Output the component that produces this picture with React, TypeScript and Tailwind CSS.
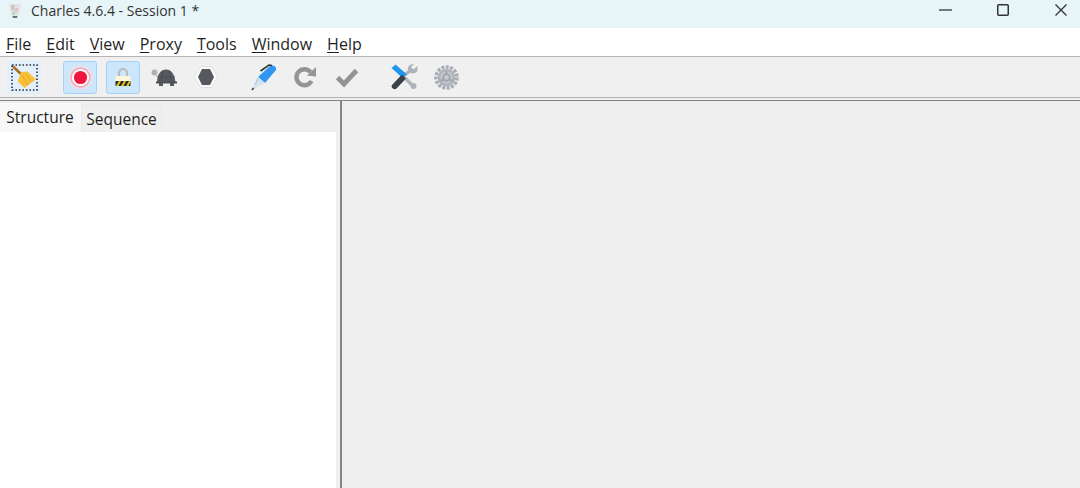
const menus = ["File", "Edit", "View", "Proxy", "Tools", "Window", "Help"];

const Broom = () => (
  <svg width="27" height="27" viewBox="0 0 27 27">
    <rect x="1" y="1" width="25" height="25" fill="none" stroke="#2b3340" strokeWidth="1.6" strokeDasharray="1.6 1.9" />
    <path d="M2 2.5 L10 10" stroke="#a8742c" strokeWidth="2.8" />
    <path d="M10 8 L16.5 7.5 L25 15.5 L20 19 L13.5 24 L6.7 17.5 Z" fill="#f8c139" />
    <path d="M11 11 L17 21 M15 10 L20 17" stroke="#e6a51f" strokeWidth="1" />
  </svg>
);

const Record = () => (
  <svg width="25" height="25" viewBox="0 0 25 25">
    <circle cx="12.5" cy="12.5" r="12" fill="#efdfe6" />
    <circle cx="12.5" cy="12.5" r="9.4" fill="#fff" stroke="#f3aabb" strokeWidth="1.6" />
    <circle cx="12.5" cy="12.5" r="6.6" fill="#f0173f" />
  </svg>
);

const Lock = () => (
  <svg width="16" height="19" viewBox="0 0 16 19">
    <path d="M4 9 V5 a4 4 0 0 1 8 0 V9" fill="none" stroke="#b9bcc1" strokeWidth="2.2" />
    <rect x="0.5" y="8" width="15" height="10" rx="1" fill="#fbf6dc" />
    <rect x="0.5" y="13" width="15" height="5" fill="#2d2c22" />
    <path d="M1 18 L4 13 H6 L3.5 18 Z M6 18 L9 13 H11 L8.5 18 Z M11 18 L14 13 H15.5 L13.5 18 Z" fill="#e7c52c" />
  </svg>
);

const Turtle = () => (
  <svg width="26" height="19" viewBox="0 0 26 19">
    <circle cx="3.5" cy="4.5" r="3" fill="#aeb1b5" />
    <path d="M4 6 L10 10 L8 12 Z" fill="#aeb1b5" />
    <path d="M6 14 C6.5 5 10.5 1.5 15 1.5 C20 1.5 23.5 6 24.5 14 Z" fill="#55585e" />
    <path d="M12 2.5 L10 14 M18 2.5 L20 14 M7 9 H24" stroke="#494c52" strokeWidth="0.8" />
    <path d="M5 13.5 H26 V15.5 H5 Z" fill="#4c4f55" />
    <path d="M8 15 H12 V18 H8 Z M19 15 H23 V18 H19 Z" fill="#55585e" />
  </svg>
);

const Stop = () => (
  <svg width="24" height="24" viewBox="0 0 24 24">
    <path d="M6.5 1.5 H17.5 L23.5 12 L17.5 22.5 H6.5 L0.5 12 Z" fill="#fafafb" stroke="#e0e2e5" strokeWidth="1" />
    <path d="M8 4 H16 L20 12 L16 20 H8 L4 12 Z" fill="#55585e" />
  </svg>
);

const Pen = () => (
  <svg width="26" height="27" viewBox="0 0 26 27">
    <path d="M7 13 L19 2 C22 0.5 26 2.5 25 6 L14 19 Z" fill="#2f96f3" />
    <path d="M9.5 7 L18 1 L21 1.5" fill="none" stroke="#30343a" strokeWidth="1.6" />
    <path d="M7 13 L14 19 L3 25 L1.5 24 Z" fill="#d5e3f1" />
    <path d="M7 14 L4 21" stroke="#a9c3dc" strokeWidth="1" />
    <path d="M2.5 24 L1 26" stroke="#3a3d42" strokeWidth="1.6" />
  </svg>
);

const Redo = () => (
  <svg width="24" height="24" viewBox="0 0 24 24">
    <path d="M18.5 16 A8 8 0 1 1 17.5 7" fill="none" stroke="#949494" strokeWidth="4.4" />
    <path d="M14 10.5 L23 11.5 L23 2 Z" fill="#949494" />
  </svg>
);

const Check = () => (
  <svg width="24" height="22" viewBox="0 0 24 22">
    <path d="M2.5 11.5 L9 18 L21.5 4.5" fill="none" stroke="#949494" strokeWidth="4.8" />
  </svg>
);

const Tools = () => (
  <svg width="27" height="26" viewBox="0 0 27 26">
    <path d="M14 14 L22 22" stroke="#aeb4bb" strokeWidth="3.4" />
    <circle cx="22.5" cy="22" r="3" fill="#aeb4bb" />
    <path d="M9 15 L21 5" stroke="#aeb4bb" strokeWidth="3.4" />
    <path d="M26.5 2 L22.5 5.5 L20 3 L23 0.5 C19 -0.5 16 3 17 6.5 C18.5 10 24 10.5 26.5 7 Z" fill="#aeb4bb" />
    <path d="M0.5 4 L4.5 0.5 L15.5 10 L12 14.5 Z" fill="#2196f0" />
    <path d="M11 10.5 L15 14.5 L5.5 24.5 C3 26.5 -0.5 23.5 1 21 Z" fill="#3c4048" />
  </svg>
);

const Gear = () => (
  <svg width="25" height="25" viewBox="0 0 25 25">
    <circle cx="12.5" cy="12.5" r="10.5" fill="none" stroke="#a9adb5" strokeWidth="3.6" strokeDasharray="3 1.4" />
    <circle cx="12.5" cy="12.5" r="7.5" fill="#c6c9ce" stroke="#aeb2b9" strokeWidth="2.6" />
    <circle cx="12.5" cy="12.5" r="3.4" fill="none" stroke="#a2a6ae" strokeWidth="2" />
    <path d="M12.5 6 V9 M6.5 16 L9.5 14.5 M18.5 16 L15.5 14.5" stroke="#a2a6ae" strokeWidth="2" />
  </svg>
);

const AppIcon = () => (
  <svg width="14" height="16" viewBox="0 0 14 16">
    <path d="M1 1 H13 L10.5 13 C10 15.5 4 15.5 3.5 13 Z" fill="#e3e4e2" />
    <path d="M3 2 L7 2 L6 8 L3.5 7 Z" fill="#c7c9c6" />
    <path d="M7 5 L10.5 5 L9.5 9 L7 9 Z" fill="#e3c2c8" />
    <path d="M4.5 8.5 L7 9 L7 12 L5 12 Z" fill="#a9d6c0" />
    <path d="M4.5 13 H9.5 L9 15 H5 Z" fill="#6d6f70" />
  </svg>
);

const ToolButton = ({ children, active, className }: { children: React.ReactNode; active?: boolean; className?: string }) => (
  <div
    className={`flex h-[33px] w-[34px] items-center justify-center rounded-[3px] [&>svg]:blur-[0.3px] ${
      active ? "border border-[#a6d2f8] bg-[#cce6fc]" : ""
    } ${className ?? ""}`}
  >
    {children}
  </div>
);

export default function App() {
  return (
    <div className="flex h-[488px] w-[1080px] flex-col overflow-hidden bg-[#efefef] font-['Open_Sans','Noto_Sans',sans-serif] text-[#1f1f1f]">
      {/* title bar */}
      <div className="flex h-[28px] shrink-0 items-center bg-[#e8f5f8] pb-[7px]">
        <div className="ml-[8px] flex w-[23px] shrink-0 items-center">
          <AppIcon />
        </div>
        <span className="text-[14px] leading-none text-[#333]">Charles 4.6.4 - Session 1 *</span>
        <div className="mr-[13px] ml-auto flex items-center gap-[45px] pb-[1px]">
          <svg width="13" height="12" viewBox="0 0 13 12">
            <path d="M0 6 H13" stroke="#333" strokeWidth="1.3" />
          </svg>
          <svg width="12" height="12" viewBox="0 0 12 12">
            <rect x="0.75" y="0.75" width="10.5" height="10.5" rx="1" fill="none" stroke="#333" strokeWidth="1.5" />
          </svg>
          <svg width="12" height="12" viewBox="0 0 12 12" className="ml-[1px]">
            <path d="M0.5 0.5 L11.5 11.5 M11.5 0.5 L0.5 11.5" stroke="#333" strokeWidth="1.3" />
          </svg>
        </div>
      </div>

      {/* menu bar */}
      <div className="flex h-[28px] shrink-0 items-center gap-[15px] bg-white pl-[6px] text-[16px] leading-none">
        {menus.map((m) => (
          <span key={m} className="pt-[4px]">
            <span className="underline decoration-1 underline-offset-2">{m[0]}</span>
            {m.slice(1)}
          </span>
        ))}
      </div>

      {/* toolbar */}
      <div className="flex h-[42px] shrink-0 items-center border-y border-t-[#b4b4b4] border-b-[#b0b0b0] bg-[#f0f0f0] pl-[7px]">
        <ToolButton className="w-[33px] bg-[#e3f0fb]">
          <Broom />
        </ToolButton>
        <ToolButton active className="ml-[22px]">
          <Record />
        </ToolButton>
        <ToolButton active className="ml-[9px]">
          <Lock />
        </ToolButton>
        <ToolButton className="ml-[7px]">
          <Turtle />
        </ToolButton>
        <ToolButton className="ml-[8px]">
          <Stop />
        </ToolButton>
        <ToolButton className="ml-[24px]">
          <Pen />
        </ToolButton>
        <ToolButton className="ml-[7px]">
          <Redo />
        </ToolButton>
        <ToolButton className="ml-[8px]">
          <Check />
        </ToolButton>
        <ToolButton className="ml-[23px]">
          <Tools />
        </ToolButton>
        <ToolButton className="ml-[8px]">
          <Gear />
        </ToolButton>
      </div>
      <div className="h-[3px] shrink-0 border-b border-[#858585]" />

      {/* panes */}
      <div className="flex min-h-0 flex-1">
        <div className="flex w-[336px] shrink-0 flex-col">
          <div className="flex h-[31px] shrink-0 items-end text-[15.5px] leading-none">
            <div className="flex h-[29px] w-[81px] items-center justify-center bg-[#f8f8f8] pr-[1px]">Structure</div>
            <div className="flex h-[27px] w-[81px] items-center justify-center border-x border-t border-[#e8e8e8] pt-[1px]">Sequence</div>
          </div>
          <div className="flex-1 bg-white" />
        </div>
        <div className="ml-[4px] w-[1.5px] shrink-0 bg-[#858585]" />
        <div className="flex-1" />
      </div>
    </div>
  );
}
